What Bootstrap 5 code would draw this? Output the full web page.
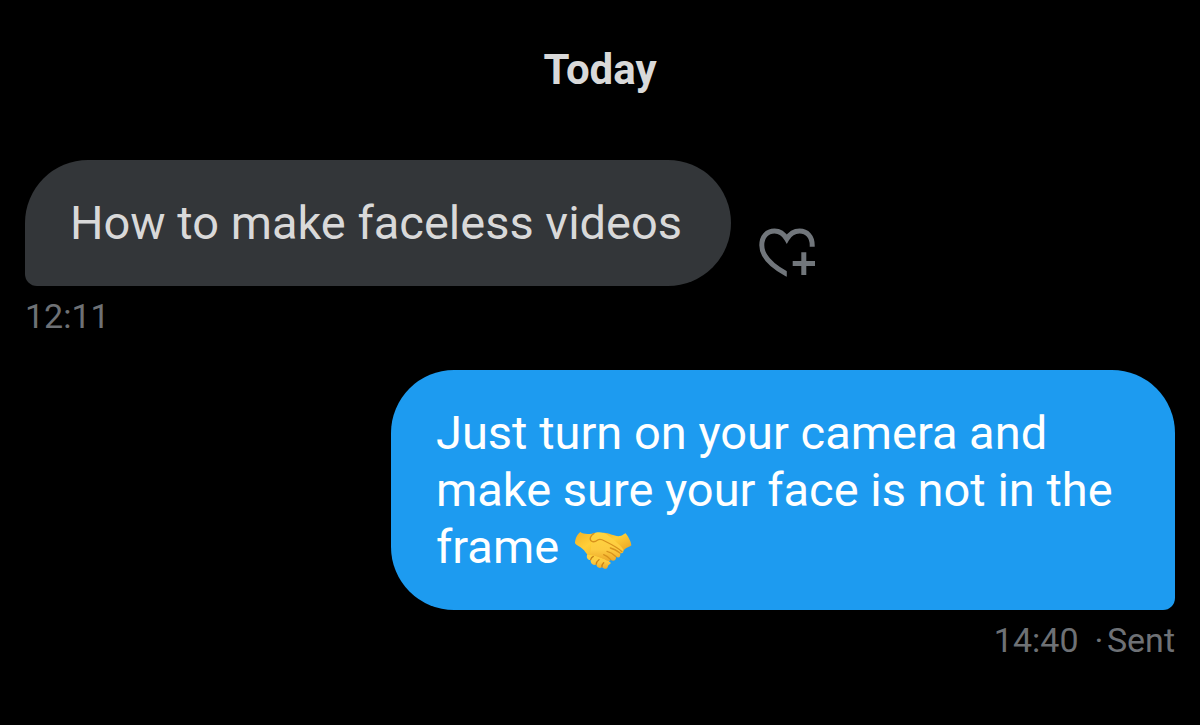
<!DOCTYPE html>
<html lang="en">
<head>
<meta charset="utf-8">
<meta name="viewport" content="width=device-width, initial-scale=1">
<title>Messages</title>
<link href="https://cdn.jsdelivr.net/npm/bootstrap@5.3.0/dist/css/bootstrap.min.css" rel="stylesheet">
<style>
  body { background: #000; color: #d9d9d9; font-family: Roboto, "Liberation Sans", sans-serif; }
  .chat { padding: 45px 25px; }
  .day { font-size: 42px; line-height: 50px; margin-bottom: 65px; }
  .bubble { max-width: 784px; padding: 34px 49px 35px 45px; border-radius: 63px; font-size: 47px; line-height: 57px; }
  .received { background: #333639; border-bottom-left-radius: 12px; }
  .sent { background: #1d9bf0; color: #fff; border-bottom-right-radius: 12px; }
  .meta { margin-top: 9px; font-size: 34px; line-height: 42px; color: #6e7175; }
  .turn { margin-bottom: 33px; }
  .react { margin: 0 0 8px 28px; color: #71767b; }
  .emoji { margin-left: 3px; }
</style>
</head>
<body>
<main class="chat container-fluid">
  <h1 class="day fw-bold text-center">Today</h1>

  <section class="turn d-flex flex-column align-items-start">
    <div class="d-flex align-items-end">
      <p class="bubble received mb-0">How to make faceless videos</p>
      <button type="button" class="react btn border-0 p-0 lh-1 flex-shrink-0" aria-label="Add reaction">
        <svg class="d-block" width="57" height="50" viewBox="0 0 57 50" fill="none" stroke="currentColor" stroke-width="5" aria-hidden="true">
          <path d="M33 48.500L27.800 46C13 38 2.800 28 2.800 17.200C2.800 8.500 8 3 15.500 3C21 3 24.800 5.800 27.800 11C30.800 5.800 35 3 40.600 3C48 3 53.200 8.500 53.200 17.200V18.700" clip-path="url(#heartcut)"/>
          <path d="M44.800 24.300V47M33.700 35.500H56"/>
          <clipPath id="heartcut"><path d="M0 0H57V19H27.800V50H0Z"/></clipPath>
        </svg>
      </button>
    </div>
    <div class="meta"><time>12:11</time></div>
  </section>

  <section class="d-flex flex-column align-items-end">
    <p class="bubble sent mb-0">Just turn on your camera and make sure your face is not in the frame
      <svg class="emoji" width="58" height="39" viewBox="39 44 174 117" role="img" aria-label="Handshake">
        <defs>
          <linearGradient id="skin" x1="0" y1="0" x2="0" y2="1"><stop offset="0" stop-color="#ffd540"/><stop offset=".6" stop-color="#fdcb40"/><stop offset="1" stop-color="#eda92a"/></linearGradient>
          <linearGradient id="cuff" x1="0" y1="0" x2="1" y2="1"><stop offset="0" stop-color="#f3b226"/><stop offset=".4" stop-color="#ffcf38"/><stop offset="1" stop-color="#e9a122"/></linearGradient>
        </defs>
        <path fill="url(#skin)" d="M80 112C74 121 79 132 89 131C88 142 97 149 106 144C107 154 116 158 123 152C130 161 141 158 141 148L150 140L108 104Z"/>
        <path fill="none" stroke="#c98317" stroke-width="4" stroke-linecap="round" d="M89 130C90 126 93 122 97 120M106 143C106 138 110 133 114 130M123 151C122 146 125 142 128 139"/>
        <path fill="url(#cuff)" d="M124 50C138 46 161 62 177 59C186 58 189 52 194 51C201 60 210 75 211 87C205 93 193 94 188 103L157 96L118 68Z"/>
        <path fill="url(#cuff)" d="M58 47C66 53 78 54 92 52L114 50L132 70L155 91L139 132C121 125 102 116 83 116C75 113 72 102 64 97C58 91 46 87 42 81C42 69 48 54 58 47Z"/>
        <path fill="url(#skin)" d="M92 73C84 69 89 57 98 51C109 45 130 47 139 55C151 65 177 84 186 98C190 108 184 113 177 110C181 121 173 127 165 121C166 132 157 137 149 130C145 137 136 134 132 129L88 112L92 75Z"/>
        <path fill="none" stroke="#d8921c" stroke-width="4" stroke-linecap="round" stroke-linejoin="round" d="M99 51C89 57 84 69 91 74C98 79 105 75 110 71C117 67 124 70 131 74C151 84 171 94 183 106M177 110C168 103 158 97 148 95M165 121C156 112 147 107 138 105M149 130C143 123 136 118 128 115"/>
      </svg></p>
    <div class="meta d-flex"><time class="me-3">14:40</time><span>·&#8202;Sent</span></div>
  </section>
</main>
<script src="https://cdn.jsdelivr.net/npm/bootstrap@5.3.0/dist/js/bootstrap.bundle.min.js"></script>
</body>
</html>
